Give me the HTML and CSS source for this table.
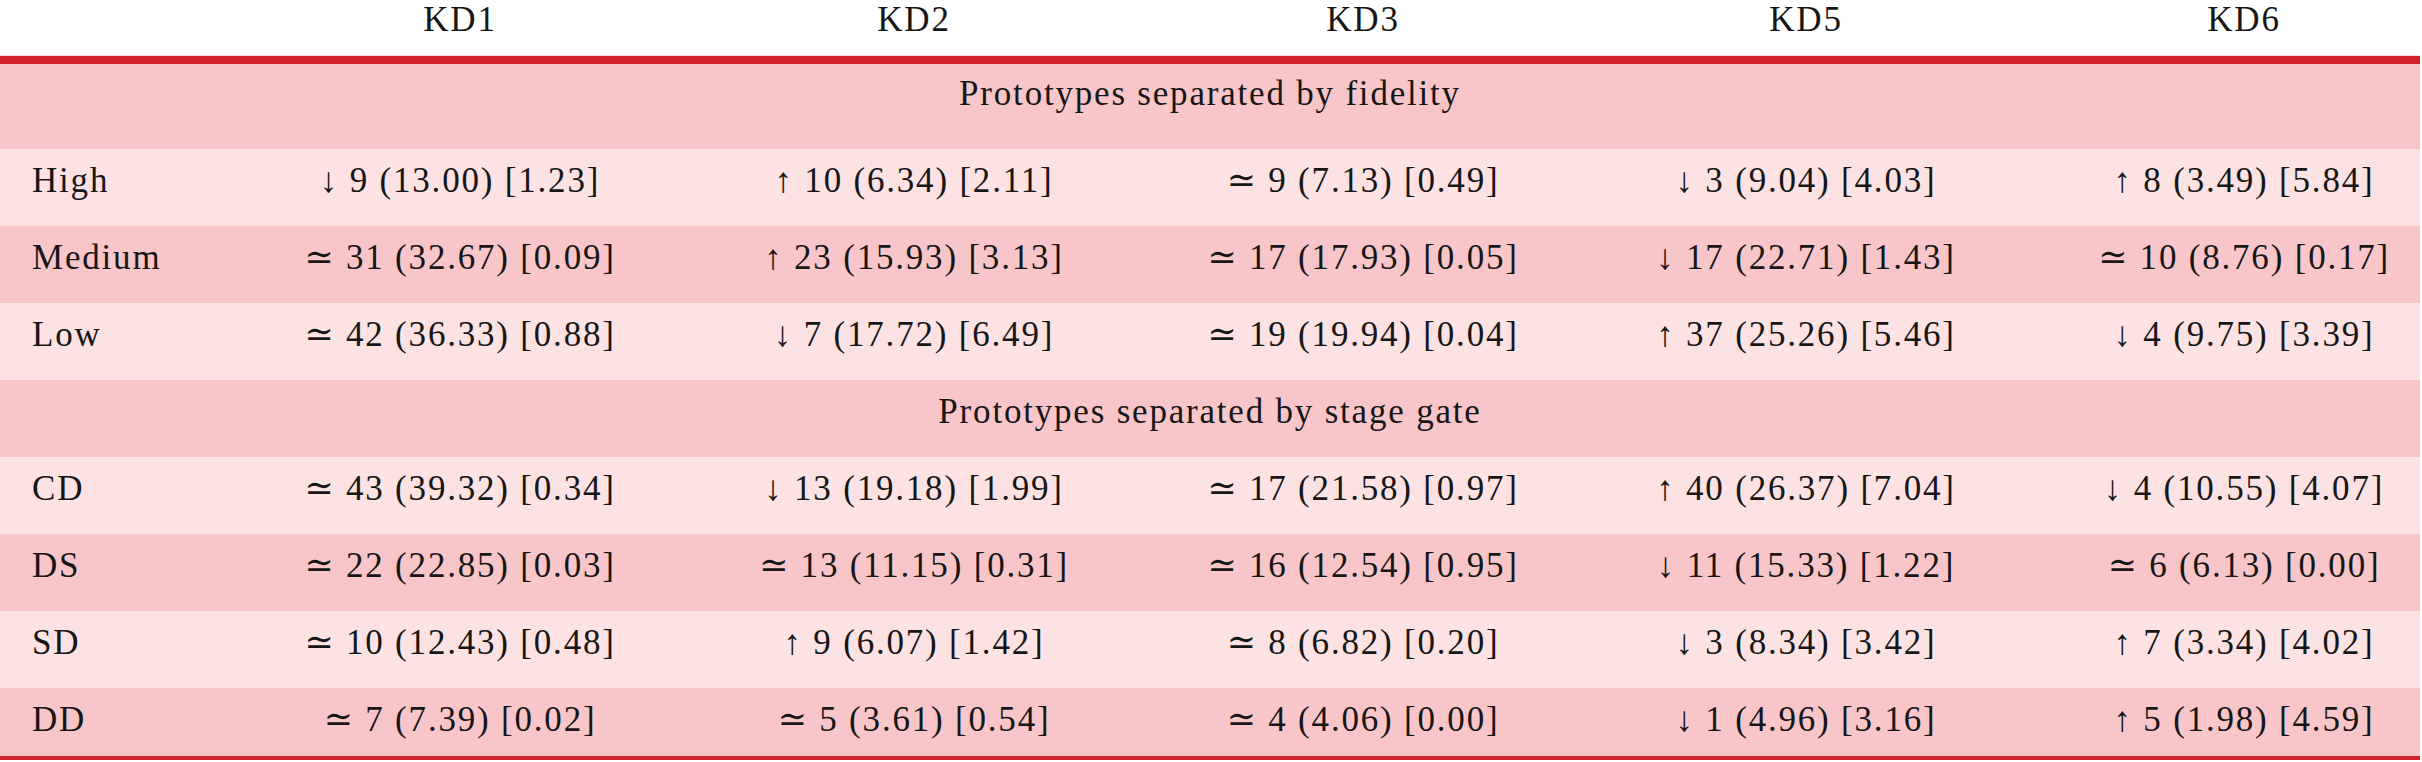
FILE: index.html
```html
<!DOCTYPE html>
<html lang="en">
<head>
<meta charset="utf-8">
<title>Prototypes table</title>
<link rel="stylesheet" href="styles.css">
</head>
<body>
<div class="table">
  <div class="row head">
    <div class="cell label"></div>
    <div class="cell">KD1</div>
    <div class="cell">KD2</div>
    <div class="cell">KD3</div>
    <div class="cell">KD5</div>
    <div class="cell last">KD6</div>
  </div>
  <div class="rule-top"></div>

  <div class="row section first-section">Prototypes separated by fidelity</div>
  <div class="row light">
    <div class="cell label">High</div>
    <div class="cell">↓ 9 (13.00) [1.23]</div>
    <div class="cell">↑ 10 (6.34) [2.11]</div>
    <div class="cell">≃ 9 (7.13) [0.49]</div>
    <div class="cell">↓ 3 (9.04) [4.03]</div>
    <div class="cell last">↑ 8 (3.49) [5.84]</div>
  </div>
  <div class="row dark">
    <div class="cell label">Medium</div>
    <div class="cell">≃ 31 (32.67) [0.09]</div>
    <div class="cell">↑ 23 (15.93) [3.13]</div>
    <div class="cell">≃ 17 (17.93) [0.05]</div>
    <div class="cell">↓ 17 (22.71) [1.43]</div>
    <div class="cell last">≃ 10 (8.76) [0.17]</div>
  </div>
  <div class="row light">
    <div class="cell label">Low</div>
    <div class="cell">≃ 42 (36.33) [0.88]</div>
    <div class="cell">↓ 7 (17.72) [6.49]</div>
    <div class="cell">≃ 19 (19.94) [0.04]</div>
    <div class="cell">↑ 37 (25.26) [5.46]</div>
    <div class="cell last">↓ 4 (9.75) [3.39]</div>
  </div>

  <div class="row section">Prototypes separated by stage gate</div>
  <div class="row light">
    <div class="cell label">CD</div>
    <div class="cell">≃ 43 (39.32) [0.34]</div>
    <div class="cell">↓ 13 (19.18) [1.99]</div>
    <div class="cell">≃ 17 (21.58) [0.97]</div>
    <div class="cell">↑ 40 (26.37) [7.04]</div>
    <div class="cell last">↓ 4 (10.55) [4.07]</div>
  </div>
  <div class="row dark">
    <div class="cell label">DS</div>
    <div class="cell">≃ 22 (22.85) [0.03]</div>
    <div class="cell">≃ 13 (11.15) [0.31]</div>
    <div class="cell">≃ 16 (12.54) [0.95]</div>
    <div class="cell">↓ 11 (15.33) [1.22]</div>
    <div class="cell last">≃ 6 (6.13) [0.00]</div>
  </div>
  <div class="row light">
    <div class="cell label">SD</div>
    <div class="cell">≃ 10 (12.43) [0.48]</div>
    <div class="cell">↑ 9 (6.07) [1.42]</div>
    <div class="cell">≃ 8 (6.82) [0.20]</div>
    <div class="cell">↓ 3 (8.34) [3.42]</div>
    <div class="cell last">↑ 7 (3.34) [4.02]</div>
  </div>
  <div class="row dark final">
    <div class="cell label">DD</div>
    <div class="cell">≃ 7 (7.39) [0.02]</div>
    <div class="cell">≃ 5 (3.61) [0.54]</div>
    <div class="cell">≃ 4 (4.06) [0.00]</div>
    <div class="cell">↓ 1 (4.96) [3.16]</div>
    <div class="cell last">↑ 5 (1.98) [4.59]</div>
  </div>
  <div class="rule-bottom"></div>
</div>
</body>
</html>
```

FILE: styles.css
```css
html, body {
  margin: 0;
  padding: 0;
  background: #ffffff;
}

body {
  font-family: "Liberation Serif", "DejaVu Serif", serif;
  font-size: 35px;
  letter-spacing: 1.8px;
  color: #161616;
}

.table {
  width: 2420px;
  display: flex;
  flex-direction: column;
}

.row {
  display: grid;
  grid-template-columns: 232px 456px 452px 446px 440px 394px;
  align-items: start;
  height: 77px;
  box-sizing: border-box;
  padding-top: 14px;
  line-height: 36px;
}

.cell {
  text-align: center;
  white-space: nowrap;
}

.cell.label {
  text-align: left;
  padding-left: 32px;
}

.cell.last {
  padding-left: 42px;
}

.head {
  height: 56px;
  padding-top: 0;
  line-height: 40px;
  background: #ffffff;
  border-bottom: 1px solid #f4dcdd;
}

.rule-top {
  height: 8px;
  background: #d2222c;
}

.rule-bottom {
  height: 4px;
  background: #d2222c;
}

.section {
  display: block;
  text-align: center;
  background: #f8c6c9;
}

.first-section {
  height: 85px;
  padding-top: 12px;
}

.light {
  background: #fde2e3;
}

.dark {
  background: #f8c6c9;
}

.final {
  height: 68px;
}
```
